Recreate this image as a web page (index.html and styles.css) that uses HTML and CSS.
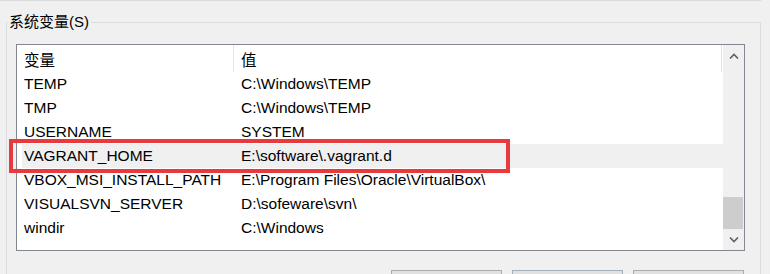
FILE: index.html
```html
<!DOCTYPE html>
<html lang="zh-CN">
<head>
  <meta charset="UTF-8">
  <title>环境变量</title>
  <link rel="stylesheet" href="styles.css">
</head>
<body>
  <div class="top-rule"></div>
  <div class="group">
    <div class="group-title">系统变量(S)</div>

    <div class="list">
      <div class="list-body">
        <div class="list-header">
          <div class="col-name">变量</div>
          <div class="col-value">值</div>
        </div>
        <div class="row"><div class="col-name">TEMP</div><div class="col-value">C:\Windows\TEMP</div></div>
        <div class="row"><div class="col-name">TMP</div><div class="col-value">C:\Windows\TEMP</div></div>
        <div class="row"><div class="col-name">USERNAME</div><div class="col-value">SYSTEM</div></div>
        <div class="row selected"><div class="col-name">VAGRANT_HOME</div><div class="col-value">E:\software\.vagrant.d</div></div>
        <div class="row"><div class="col-name">VBOX_MSI_INSTALL_PATH</div><div class="col-value">E:\Program Files\Oracle\VirtualBox\</div></div>
        <div class="row"><div class="col-name">VISUALSVN_SERVER</div><div class="col-value">D:\sofeware\svn\</div></div>
        <div class="row"><div class="col-name">windir</div><div class="col-value">C:\Windows</div></div>
      </div>

      <div class="scrollbar">
        <div class="scroll-btn">
          <svg width="10" height="6" viewBox="0 0 10 6"><polyline points="1,5.5 5,1.5 9,5.5" fill="none" stroke="#606060" stroke-width="1.6"/></svg>
        </div>
        <div class="scroll-track">
          <div class="scroll-thumb"></div>
        </div>
        <div class="scroll-btn">
          <svg width="10" height="6" viewBox="0 0 10 6"><polyline points="1,0.5 5,4.5 9,0.5" fill="none" stroke="#606060" stroke-width="1.6"/></svg>
        </div>
      </div>
    </div>

    <!-- 标注框 -->
    <div class="highlight-box"></div>

    <!-- 按钮文字在截图下方被裁掉 -->
    <div class="buttons">
      <button class="btn" aria-label="新建"></button>
      <button class="btn btn-default" aria-label="编辑"></button>
      <button class="btn" aria-label="删除"></button>
    </div>
  </div>
</body>
</html>
```

FILE: styles.css
```css
:root {
  --bg-color: #f0f0f0;
  --rule-color: #dcdcdc;
  --list-border: #828790;
  --selected-bg: #f0f0f0;
  --mark-color: #e8393c;
}

body {
  margin: 0;
  background-color: var(--bg-color);
  font-family: "Liberation Sans", "Noto Sans CJK SC", sans-serif;
  font-size: 15.5px;
  color: #000;
  overflow: hidden;
}

.top-rule {
  width: 761px;
  border-top: 1px solid #dadada;
}

.group {
  position: relative;
  box-sizing: border-box;
  width: 755px;
  height: 300px;
  margin: 21px 0 0 6px;
  padding: 0 0 0 9px;
  border: 1px solid var(--rule-color);
}

.group-title {
  display: table;
  margin: -11px 0 0 -9px;
  padding: 0 2px;
  line-height: 20px;
  font-size: 15px;
  background-color: var(--bg-color);
}

.list {
  display: flex;
  box-sizing: border-box;
  width: 729px;
  height: 207px;
  margin-top: 12px;
  background-color: #fff;
  border: 1px solid var(--list-border);
}

.list-body {
  flex: 1;
}

.list-header,
.row {
  display: flex;
  height: 24px;
  line-height: 24px;
  white-space: nowrap;
}

.list-header {
  height: 27px;
  line-height: 23px;
  box-sizing: border-box;
  padding-top: 4px;
  margin-right: 1px;
  border-right: 1px solid #e5e5e5;
}

.list-header .col-name {
  margin-top: -4px;
  padding-top: 4px;
  border-right: 1px solid #e5e5e5;
}

.col-name {
  box-sizing: border-box;
  width: 217px;
  padding-left: 7px;
}

.col-value {
  flex: 1;
  padding-left: 7px;
}

.row.selected {
  background: linear-gradient(to right, transparent 5px, var(--selected-bg) 5px);
}

.scrollbar {
  display: flex;
  flex-direction: column;
  width: 21px;
  background-color: #f0f0f0;
}

.scroll-btn {
  display: flex;
  justify-content: center;
  align-items: center;
  height: 21px;
}

.scroll-track {
  flex: 1;
  display: flex;
  flex-direction: column;
  justify-content: flex-end;
}

.scroll-thumb {
  height: 32px;
  margin-right: 1px;
  background-color: #cdcdcd;
}

.highlight-box {
  position: absolute;
  left: 2px;
  top: 116px;
  box-sizing: border-box;
  width: 501px;
  height: 34px;
  border: 4px solid var(--mark-color);
}

.buttons {
  display: flex;
  justify-content: flex-end;
  gap: 10px;
  width: 728px;
  margin-top: 19px;
}

.btn {
  box-sizing: border-box;
  width: 111px;
  height: 30px;
  background-color: #e1e1e1;
  border: 1px solid #adadad;
}

.btn-default {
  border-color: #a3b1be;
}
```
